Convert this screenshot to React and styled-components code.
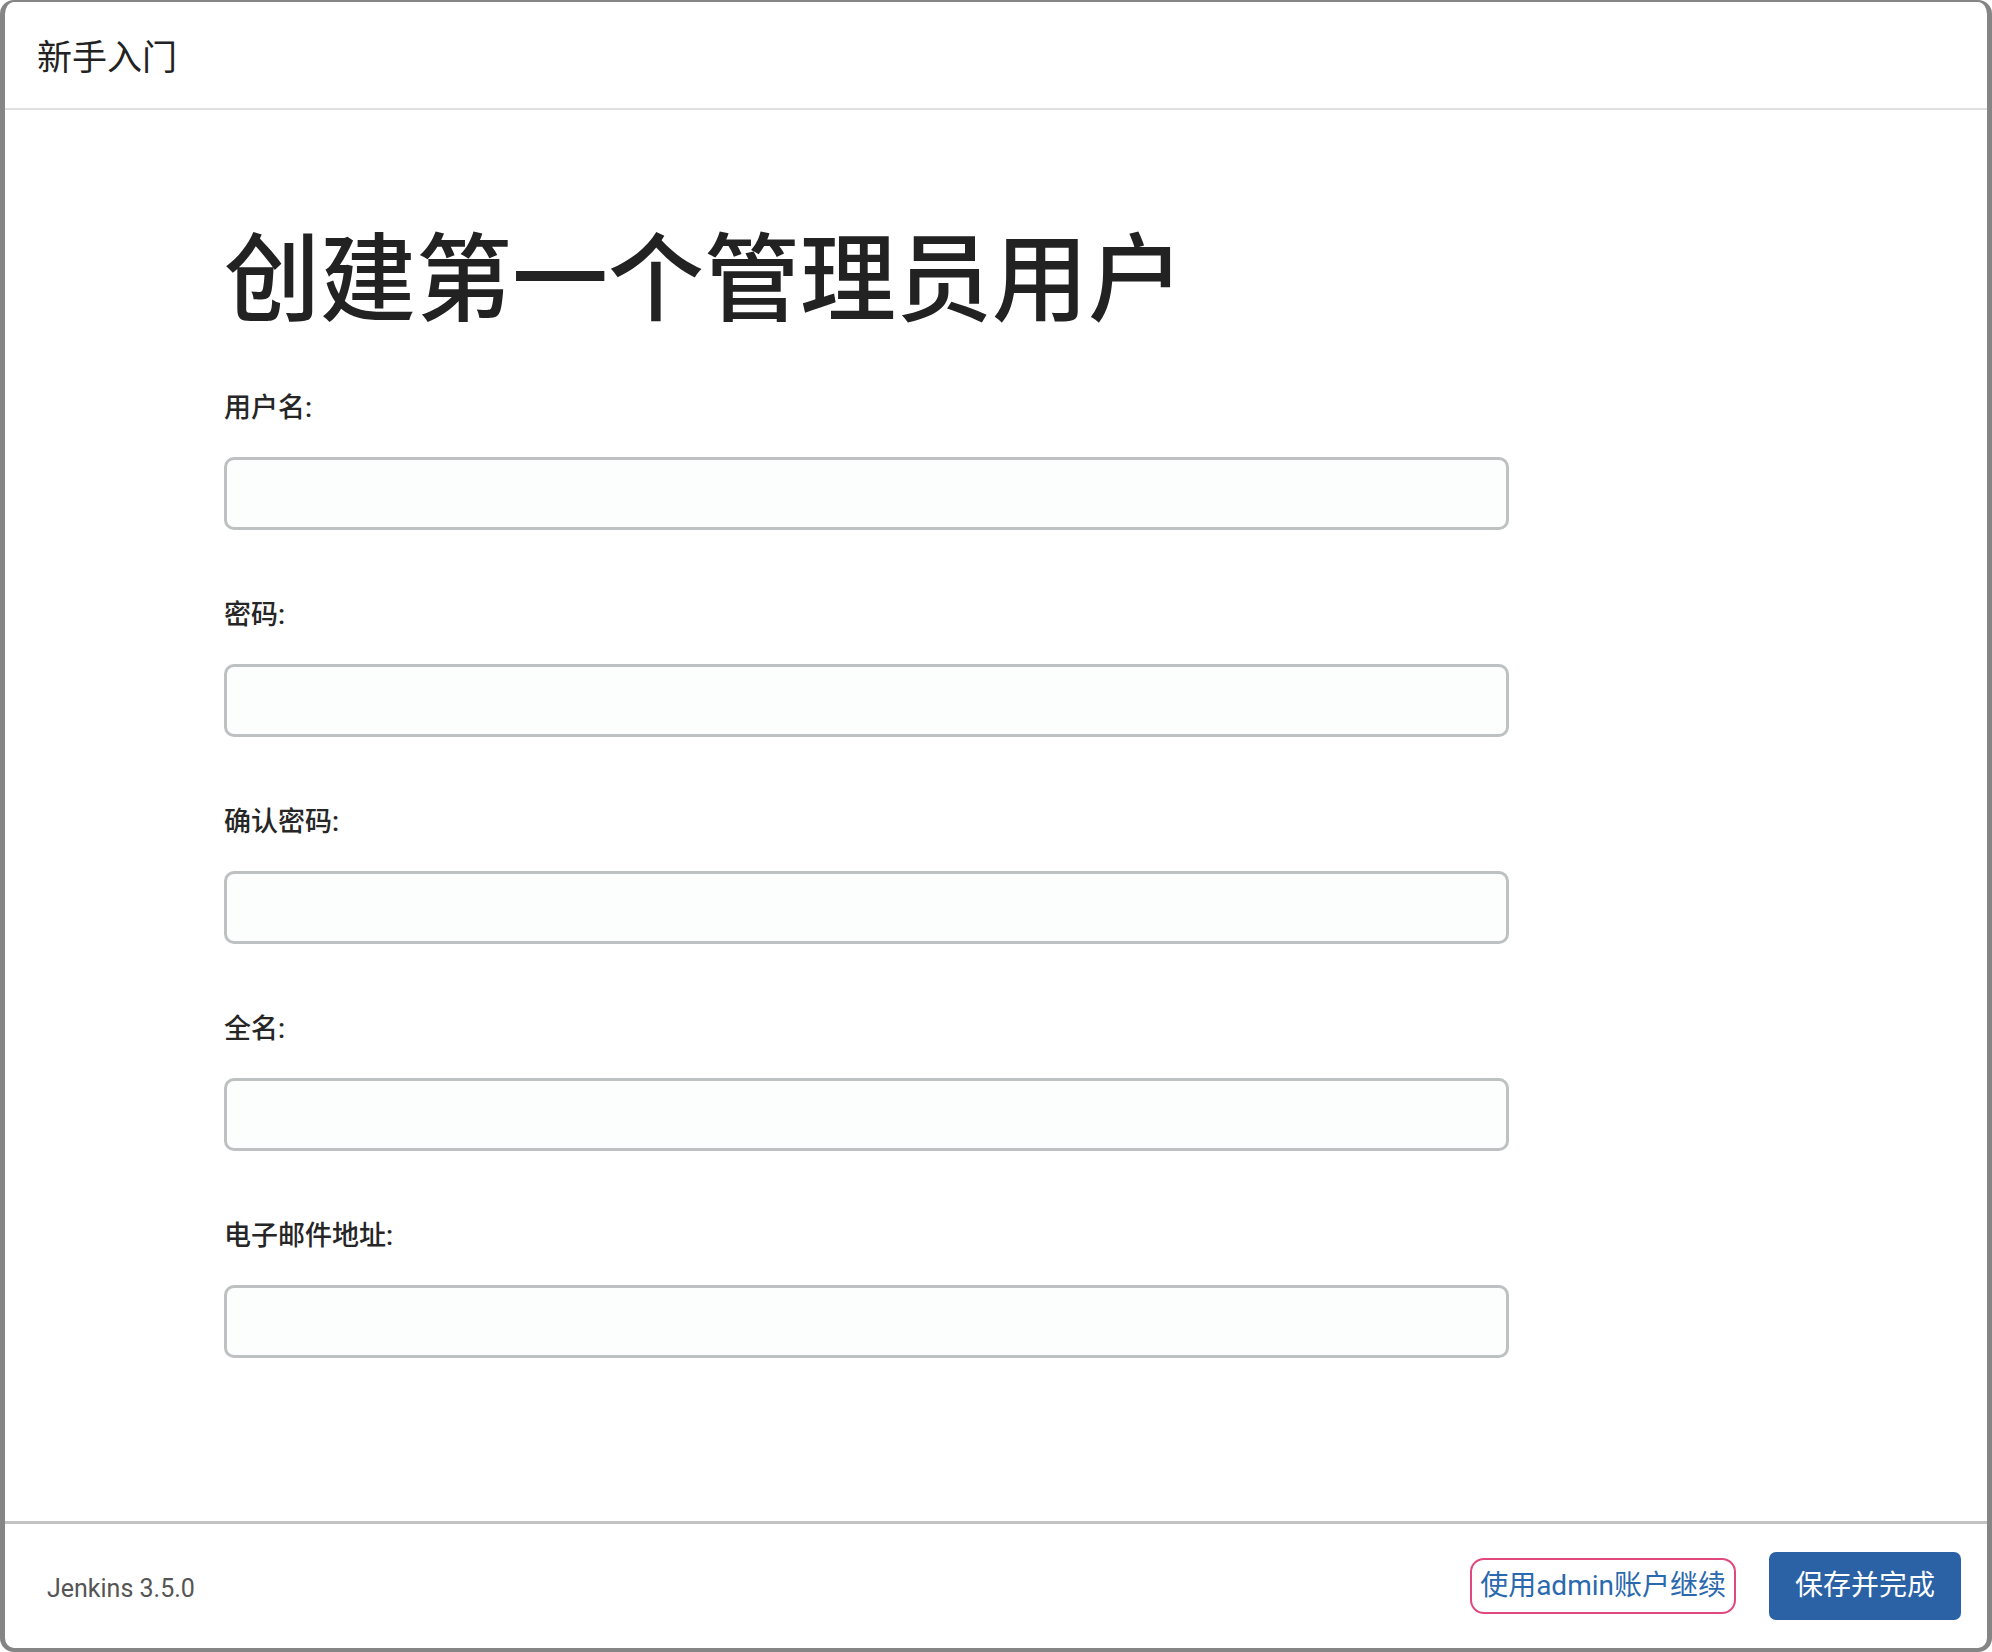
import React from "react";
import styled, { createGlobalStyle } from "styled-components";

const GlobalStyle = createGlobalStyle`
  html, body { margin: 0; padding: 0; background: #ffffff; }
  body { font-family: Roboto, "Noto Sans CJK SC", sans-serif; }
  * { box-sizing: border-box; }
`;

const Frame = styled.div`
  width: 1992px;
  height: 1652px;
  display: flex;
  flex-direction: column;
  background: #ffffff;
  border-style: solid;
  border-color: #858585;
  border-width: 2px 5px 4px 5px;
  border-radius: 14px;
  overflow: hidden;
`;

const Header = styled.header`
  height: 108px;
  flex: none;
  display: flex;
  align-items: center;
  padding: 8px 0 0 32px;
  border-bottom: 2px solid #e0e0e0;
`;

const HeaderTitle = styled.h4`
  margin: 0;
  font-size: 35px;
  font-weight: 400;
  color: #222222;
  line-height: 1.2;
`;

const Content = styled.main`
  flex: 1;
  padding: 113px 0 0 219px;
  display: flex;
  flex-direction: column;
`;

const Title = styled.h1`
  margin: 0 0 53px 0;
  font-size: 96px;
  font-weight: 500;
  line-height: 114px;
  color: #222222;
`;

const FieldList = styled.div`
  display: flex;
  flex-direction: column;
  gap: 67px;
`;

const Field = styled.div`
  display: flex;
  flex-direction: column;
  gap: 31px;
`;

const Label = styled.label`
  font-size: 27px;
  line-height: 36px;
  font-weight: 500;
  color: #262626;
`;

const Input = styled.input`
  width: 1285px;
  height: 73px;
  border: 3px solid #bec1c1;
  border-radius: 10px;
  background: #fcfefe;
  font-size: 27px;
  padding: 0 16px;
  outline: none;
`;

const Footer = styled.footer`
  height: 127px;
  flex: none;
  display: flex;
  align-items: center;
  padding: 4px 26px 0 42px;
  border-top: 3px solid #c3c3c3;
`;

const Version = styled.span`
  font-size: 25px;
  color: #555555;
  flex: 1;
`;

const LinkButton = styled.button`
  height: 56px;
  padding: 0 8px;
  border: 2px solid #e0487e;
  border-radius: 14px;
  background: #ffffff;
  color: #2b69ae;
  font-family: Roboto, "Noto Sans CJK SC", sans-serif;
  font-size: 28px;
  line-height: 1;
  margin: -4px 33px 0 0;
`;

const PrimaryButton = styled.button`
  height: 68px;
  width: 192px;
  border: none;
  border-radius: 7px;
  background: #2a62a5;
  color: #ffffff;
  font-family: Roboto, "Noto Sans CJK SC", sans-serif;
  font-size: 28px;
  line-height: 1;
  margin-top: -4px;
`;

const fields = ["用户名:", "密码:", "确认密码:", "全名:", "电子邮件地址:"];

export default function App() {
  return (
    <>
      <GlobalStyle />
      <Frame>
        <Header>
          <HeaderTitle>新手入门</HeaderTitle>
        </Header>
        <Content>
          <Title>创建第一个管理员用户</Title>
          <FieldList>
            {fields.map((f, i) => (
              <Field key={f}>
                <Label>{f}</Label>
                <Input type={i === 1 || i === 2 ? "password" : "text"} />
              </Field>
            ))}
          </FieldList>
        </Content>
        <Footer>
          <Version>Jenkins 3.5.0</Version>
          <LinkButton>使用admin账户继续</LinkButton>
          <PrimaryButton>保存并完成</PrimaryButton>
        </Footer>
      </Frame>
    </>
  );
}
